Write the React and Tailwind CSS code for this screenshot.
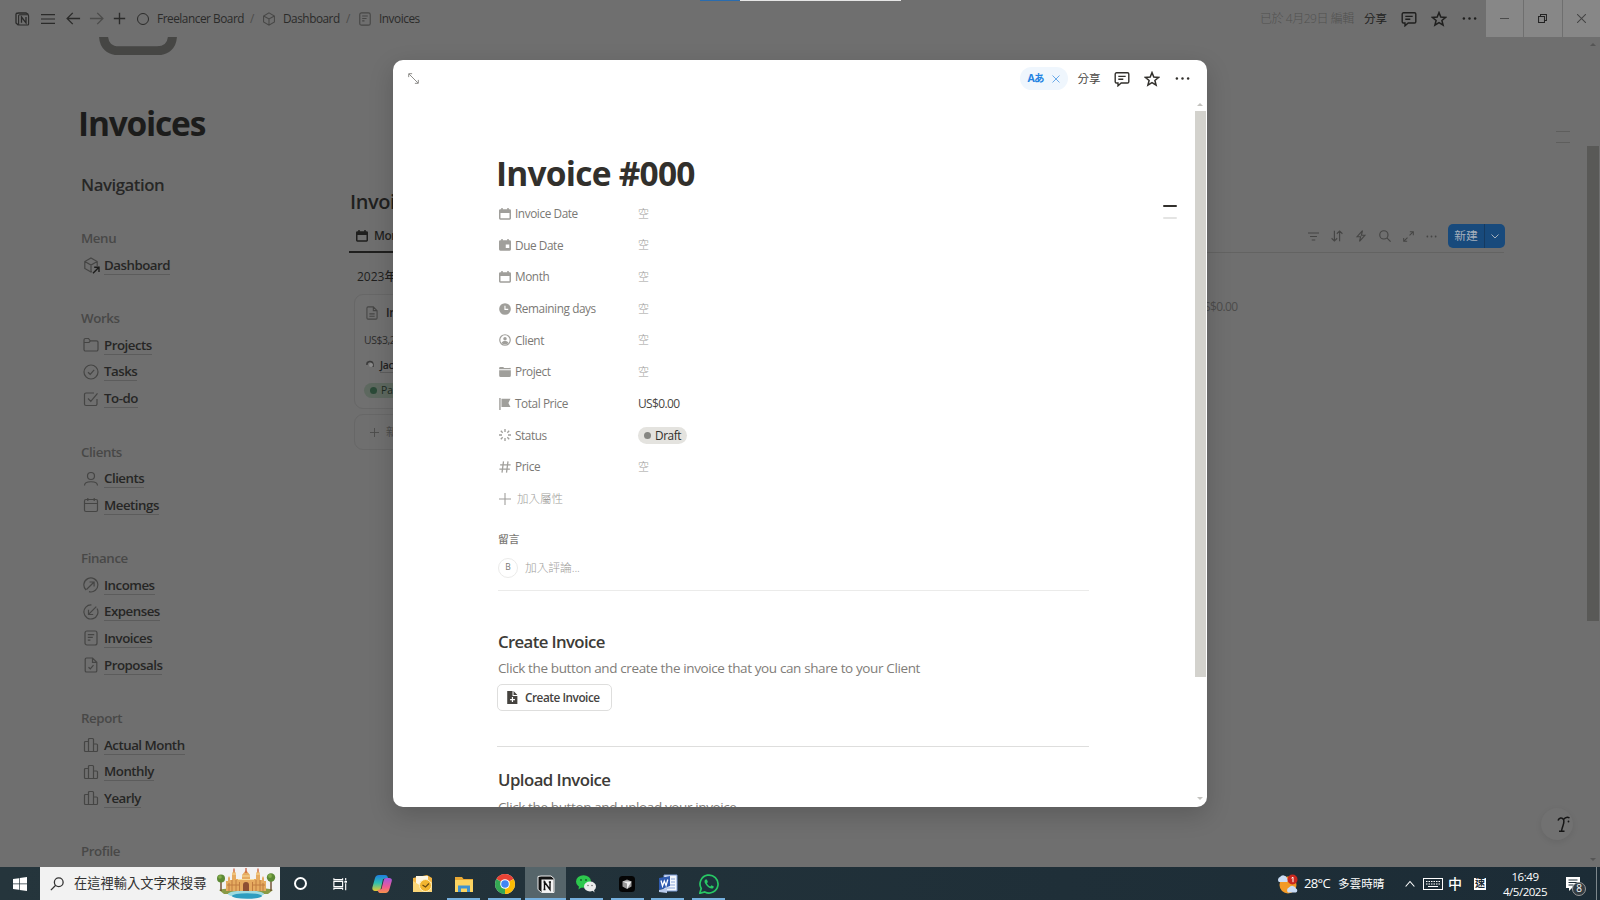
import React from "react";

const Svg = ({ s = 14, vb = 16, w = 1.3, className = "", children }) => (
  <svg width={s} height={s} viewBox={`0 0 ${vb} ${vb}`} fill="none" stroke="currentColor" strokeWidth={w} className={"shrink-0 " + className}>
    {children}
  </svg>
);

const Cube = (p) => <Svg {...p}><path d="M8 1 14.2 4.5v7L8 15 1.8 11.5v-7zM1.8 4.5 8 8l6.2-3.5M8 8v7" /></Svg>;
const NotePage = (p) => <Svg {...p}><rect x="2" y="1" width="12" height="14" rx="2" /><path d="M4.800 4.600h6.400M4.800 7.400h5M4.800 10.200h2.600" /></Svg>;
const Comment = (p) => <Svg {...p}><path d="M2.500 1.800h11a1.300 1.300 0 0 1 1.300 1.300v7.600a1.300 1.300 0 0 1-1.300 1.300H7.200L4 14.800V12H2.500a1.300 1.300 0 0 1-1.300-1.300V3.100a1.300 1.300 0 0 1 1.300-1.300zM4.300 5.400h7.400M4.300 8.200h5" /></Svg>;
const Star = (p) => <Svg {...p}><path d="m8 1.600 1.800 4.500 4.800.3-3.700 3.100 1.200 4.700L8 11.600l-4.100 2.600 1.200-4.700L1.400 6.400l4.800-.3z" /></Svg>;
const Dots = (p) => <Svg {...p}><g fill="currentColor" stroke="none"><circle cx="2" cy="8" r="1.300" /><circle cx="8" cy="8" r="1.300" /><circle cx="14" cy="8" r="1.300" /></g></Svg>;
const Folder = (p) => <Svg {...p}><path d="M1 12.500V3a1.500 1.500 0 0 1 1.500-1.500h3L7.300 3.800h6.200A1.500 1.500 0 0 1 15 5.300v7.200a1.500 1.500 0 0 1-1.500 1.500h-11A1.500 1.500 0 0 1 1 12.500zM1 5.500h5l1.500-1.700" /></Svg>;
const CheckCircle = (p) => <Svg {...p}><circle cx="8" cy="8" r="7" /><path d="m5 8.200 2.200 2.100 4-4.400" /></Svg>;
const CheckSquare = (p) => <Svg {...p}><path d="M14 8v5a1.500 1.500 0 0 1-1.500 1.500h-9.500A1.500 1.500 0 0 1 1.500 13V3.500A1.500 1.500 0 0 1 3 2h8M5 7.500l2.800 2.800 6.700-8" /></Svg>;
const Person = (p) => <Svg {...p}><circle cx="8" cy="5" r="3.500" /><path d="M1.500 14.500c0-5 13-5 13 0" /></Svg>;
const Calendar = (p) => <Svg {...p}><rect x="1.500" y="2.500" width="13" height="12" rx="1.500" /><path d="M1.500 6.500h13M4.800 1v3M11.200 1v3" /></Svg>;
const ArrowUp = (p) => <Svg {...p}><path d="M3 13A7 7 0 1 1 6 14.700M3.500 12.500 10.800 5.300M6.500 5h4.600v4.600" /></Svg>;
const ArrowDown = (p) => <Svg {...p}><path d="M14 4.500A7 7 0 1 1 8.500 1M13.300 2.700 5.800 10.200M5.500 5.800v4.700h4.700" /></Svg>;
const FileCheck = (p) => <Svg {...p}><path d="M9.500 1H3.500A1.300 1.300 0 0 0 2.200 2.300v11.400A1.300 1.300 0 0 0 3.500 15h9a1.300 1.300 0 0 0 1.300-1.300V5.300zM9.500 1v4.300h4.300M5.500 10.200l1.800 1.600 3.200-3.600" /></Svg>;
const Bars = (p) => <Svg {...p}><path d="M5.500 14.500h-3A1 1 0 0 1 1.500 13.500V5.500a1 1 0 0 1 1-1h3zM5.500 14.500v-12a1 1 0 0 1 1-1h3a1 1 0 0 1 1 1v12zM10.500 14.500v-7.500h3a1 1 0 0 1 1 1v5.500a1 1 0 0 1-1 1z" /></Svg>;
const FileText = (p) => <Svg {...p}><path d="M9.500 1H3.500A1.300 1.300 0 0 0 2.200 2.300v11.400A1.300 1.300 0 0 0 3.500 15h9a1.300 1.300 0 0 0 1.300-1.300V5.300zM9.500 1v4.300h4.300M5 9h6M5 11.800h6" /></Svg>;
const SolidCal = (p) => <Svg {...p}><path fill="currentColor" stroke="none" fillRule="evenodd" d="M3 0h2v1.500h6V0h2v1.500h1.200A1.800 1.800 0 0 1 16 3.300v10.400a1.800 1.800 0 0 1-1.800 1.800H1.800A1.800 1.800 0 0 1 0 13.700V3.300A1.800 1.800 0 0 1 1.800 1.500H3zM2 6.500v7h12v-7z" /></Svg>;

const DashIcon = () => (
  <span className="relative flex">
    <Cube s={16} w={1.2} />
    <svg width="8" height="8" viewBox="0 0 8 8" className="absolute -right-[1px] -bottom-[1px] bg-[#6f6f6f] text-[#1d1d1c]" fill="none" stroke="currentColor" strokeWidth="1.400"><path d="M1 7.300 6.700 1.500M2.200 1.200h4.800v4.800" /></svg>
  </span>
);

const nav = [
  ["Menu", [["Dashboard", DashIcon]]],
  ["Works", [["Projects", Folder], ["Tasks", CheckCircle], ["To-do", CheckSquare]]],
  ["Clients", [["Clients", Person], ["Meetings", Calendar]]],
  ["Finance", [["Incomes", ArrowUp], ["Expenses", ArrowDown], ["Invoices", NotePage], ["Proposals", FileCheck]]],
  ["Report", [["Actual Month", Bars], ["Monthly", Bars], ["Yearly", Bars]]],
  ["Profile", []],
];

function TopBar() {
  return (
    <header className="flex h-[37px] shrink-0 items-center text-[11.800px] tracking-[-0.039em] text-[#2b2b2a]">
      <div className="flex flex-1 items-center">
        <svg width="15" height="14" viewBox="0 0 15 14" className="ml-[15px]" fill="none" stroke="currentColor">
          <path d="M1 1.500v9.500l2.500 2.200M1 1.500 3.700 1h7.300l2.500 1.500" strokeWidth="1.300" />
          <rect x="3.600" y="2.800" width="10" height="10.200" rx="1" strokeWidth="1.100" />
          <path d="M6.500 10.800V5l4.500 5.800V5" strokeWidth="1.300" />
        </svg>
        <Svg s={14} w={1.400} className="ml-[11px]"><path d="M0 3h16M0 8h16M0 13h16" /></Svg>
        <Svg s={15} w={1.400} className="ml-[11px]"><path d="M15 8H1.500M7.200 2 1.200 8l6 6" /></Svg>
        <Svg s={15} w={1.400} className="ml-[8px] text-[#4c4c4b]"><path d="M1 8h13.500M8.800 2l6 6-6 6" /></Svg>
        <Svg s={13} w={1.700} className="ml-[9px]"><path d="M8 1v14M1 8h14" /></Svg>
        <span className="ml-[11px] size-[12px] rounded-full border-[1.600px] border-current" />
        <span className="ml-[8px] w-[86px] whitespace-nowrap">Freelancer Board</span>
        <span className="ml-[7px] w-[5px] text-[#4c4c4b]">/</span>
        <Cube s={14} w={1.200} className="ml-[7px] text-[#474746]" />
        <span className="ml-[7px] w-[56px]">Dashboard</span>
        <span className="ml-[7px] w-[5px] text-[#4c4c4b]">/</span>
        <NotePage s={14} w={1.300} className="ml-[7px] text-[#474746]" />
        <span className="ml-[7px]">Invoices</span>
      </div>
      <span className="w-[104px] text-[12px] font-light whitespace-nowrap text-[#515150]">已於 4月29日 編輯</span>
      <span className="w-[37px] text-[11.500px] tracking-normal text-[#1f1f1e]">分享</span>
      <Comment s={16} w={1.400} className="text-[#1f1f1e]" />
      <Star s={16} w={1.500} className="ml-[14px] text-[#1f1f1e]" />
      <Dots s={15} className="ml-[15px] text-[#1f1f1e]" />
      <div className="ml-[9px] flex h-full w-[114px] gap-px text-[#444]">
        <span className="flex flex-1 items-center justify-center bg-[#878787]"><Svg s={9} w={1.600}><path d="M0 8h16" /></Svg></span>
        <span className="flex flex-1 items-center justify-center bg-[#878787] text-[#222]"><Svg s={9} w={1.800}><path d="M1 4.500h10.500V15H1zM4.500 4.500V1H15v10.500h-3.500" /></Svg></span>
        <span className="flex flex-1 items-center justify-center bg-[#878787]"><Svg s={9} w={1.800}><path d="m0 0 16 16M16 0 0 16" /></Svg></span>
      </div>
    </header>
  );
}

function Sidebar() {
  return (
    <aside className="flex w-[349px] shrink-0 flex-col pl-[81px]">
      <svg width="78" height="18" viewBox="0 0 78 18" className="ml-[18px] shrink-0" fill="none" stroke="#464644" strokeWidth="9"><path d="M4.500-2C4.500 9 11 13.800 20 13.800h38C67 13.800 73.500 9 73.500-2" /></svg>
      <h1 className="mt-[44px] -ml-[3px] h-[48px] text-[33.500px] leading-[48px] font-bold tracking-[-0.036em] text-[#1c1c1b]">Invoices</h1>
      <h2 className="mt-[26px] h-[24px] text-[16.800px] leading-[24px] font-semibold tracking-[-0.027em] text-[#272726]">Navigation</h2>
      <nav className="mt-[28.300px] flex flex-col gap-[26.670px] text-[13.300px] tracking-[-0.037em]">
        {nav.map(([title, items]) => (
          <section key={title} className="flex flex-col">
            <h3 className="h-[26.670px] leading-[26.670px] font-semibold tracking-[-0.030em] text-[#484847]">{title}</h3>
            {items.map(([label, Icon]) => (
              <a key={label} className="flex h-[26.670px] items-center gap-[5px] pl-[2px] text-[#454544]">
                <Icon s={16} w={1.200} />
                <span className="border-b border-[#5c5c5c] leading-[18px] font-semibold text-[#262625]">{label}</span>
              </a>
            ))}
          </section>
        ))}
      </nav>
    </aside>
  );
}

function Board() {
  return (
    <section className="flex w-[1155px] shrink-0 flex-col pt-[151px] text-[#1f1f1e]">
      <h2 className="h-[28px] pl-[1px] text-[20px] leading-[28px] font-semibold tracking-[-0.020em]">Invoices</h2>
      <div className="mt-[6px] flex h-[31px] items-start justify-between border-b border-[#636362]">
        <span className="flex h-[31px] items-center gap-[6px] border-b-2 border-[#1f1f1e] pr-2 pb-[1px] pl-[7px] text-[11.800px] font-semibold tracking-[-0.035em]">
          <SolidCal s={12} />Month
        </span>
        <div className="mt-[2px] flex items-center text-[#454544]">
          <Svg s={11} w={1.600}><path d="M0 3h16M3 8h10M5.500 13h5" /></Svg>
          <Svg s={12} w={1.500} className="ml-[12px]"><path d="M4.500 1v13.500M.8 11l3.700 3.700L8.200 11M11.500 15V1.500M7.800 5l3.700-3.700L15.200 5" /></Svg>
          <Svg s={12} w={1.500} className="ml-[12px]"><path d="M10 .8 2.800 9H7.500L6 15.200 13.200 7H8.500z" /></Svg>
          <Svg s={12} w={1.500} className="ml-[12px]"><circle cx="6.500" cy="6.500" r="5.500" /><path d="m10.500 10.500 5 5" /></Svg>
          <Svg s={11} w={1.500} className="ml-[12px]"><path d="M9.500 6.500 15 1M10 1h5v5M6.500 9.500 1 15M1 10v5h5" /></Svg>
          <Dots s={11} className="ml-[12px]" />
          <button className="ml-[11px] -mr-[1px] flex h-[24px] w-[57px] items-center overflow-hidden rounded-[5px] bg-[#184a7c] text-[11.800px] text-[#a5b0bd]">
            <span className="flex h-full w-[37px] items-center justify-center border-r border-[#153a60]">新建</span>
            <span className="flex flex-1 justify-center"><Svg s={8} w={2}><path d="m1 5 7 7 7-7" /></Svg></span>
          </button>
        </div>
      </div>
      <div className="flex items-start">
        <div className="flex w-[280px] flex-col pl-[5px]">
          <div className="mt-[14px] h-[20px] pl-[3px] text-[12px] leading-[20px] font-medium">2023年8月</div>
          <div className="mt-[7px] flex h-[115px] flex-col rounded-[9px] border border-[#676767] bg-[#707070] pl-[9px] text-[11px]">
            <span className="mt-[9px] flex h-[18px] items-center gap-[7px] pl-[1px] text-[11.800px] font-semibold tracking-[-0.030em]"><FileText s={14} w={1.200} className="text-[#454544]" />Invoice #001</span>
            <span className="mt-[10px] h-[17px] text-[10.400px] leading-[17px] tracking-[-0.040em] text-[#2c2c2b]">US$3,200.00</span>
            <span className="mt-[8px] flex h-[16px] items-center gap-[5px] pl-[2px] text-[10.400px] font-semibold tracking-[-0.030em]">
              <svg width="9" height="10" viewBox="0 0 9 10"><path d="M1 5a3 3 0 0 1 6-1v3" fill="none" stroke="#3b3b3b" strokeWidth="1.500" /><circle cx="5" cy="5" r="2" fill="#8b8b8b" /></svg>
              <span className="border-b border-[#5c5c5c] leading-[14px]">Jack Smith</span>
            </span>
            <span className="mt-[10px] flex h-[15px] w-[48px] items-center gap-[4px] rounded-full bg-[#5d685f] pl-[6px] text-[10.400px] text-[#1d2b23]"><i className="size-[7px] rounded-full bg-[#2b4a38]" />Paid</span>
          </div>
          <div className="mt-[5px] flex h-[36px] items-center gap-[7px] rounded-[9px] border border-[#676767] pl-[15px] text-[11.500px] text-[#4c4c4b]"><Svg s={9} w={1.600}><path d="M8 0v16M0 8h16" /></Svg>新建</div>
        </div>
        <span className="mt-[45px] ml-[567px] text-[12px] leading-[18px] tracking-[-0.053em] text-[#4c4c4b]">US$0.00</span>
      </div>
    </section>
  );
}

const Clock = (p) => <Svg {...p}><path fill="currentColor" stroke="none" fillRule="evenodd" d="M8 .2a7.800 7.800 0 1 0 0 15.600A7.800 7.800 0 0 0 8 .2zM7.200 3.500h1.500v4.200h3.600v1.500H7.200z" /></Svg>;
const SolidDue = (p) => <Svg {...p}><path fill="currentColor" stroke="none" fillRule="evenodd" d="M3 0h2v1.500h6V0h2v1.500h1.200A1.800 1.800 0 0 1 16 3.300v10.400a1.800 1.800 0 0 1-1.800 1.800H1.800A1.800 1.800 0 0 1 0 13.700V3.300A1.800 1.800 0 0 1 1.800 1.500H3zM9 7.300v4.700h4.700V7.300z" /></Svg>;
const UserCircle = (p) => <Svg {...p}><circle cx="8" cy="8" r="7" strokeWidth="1.600" /><circle cx="8" cy="6.200" r="2.300" fill="currentColor" stroke="none" /><path d="M3.500 12c1-3.500 8-3.500 9 0-2 2.500-7 2.500-9 0z" fill="currentColor" stroke="none" /></Svg>;
const SolidFolder = (p) => <Svg {...p}><g fill="currentColor" stroke="none"><path d="M.2 4.300V2.700A1.500 1.500 0 0 1 1.700 1.200h3.800l1.500 1.300h7.200A1.500 1.500 0 0 1 15.800 4v.3z" /><path d="M.2 5.500h15.600v7.300a2 2 0 0 1-2 2H2.200a2 2 0 0 1-2-2z" /></g></Svg>;
const Flag = (p) => <Svg {...p}><path fill="currentColor" stroke="none" d="M.3 0h1.900v16H.3zM3.300 1h12L12.500 6.500l2.800 5.500h-12z" /></Svg>;
const Burst = (p) => <Svg {...p}><path strokeWidth="1.800" d="M8 0v4M8 12v4M0 8h4M12 8h4M2.400 2.400l2.500 2.500M11.100 11.100l2.500 2.500M2.400 13.600l2.500-2.500M11.100 4.900l2.500-2.500" /></Svg>;
const Hash = (p) => <Svg {...p}><path strokeWidth="1.700" d="M6 .5 4 15.500M12 .5l-2 15M1.500 5.300h14M.5 10.700h14" /></Svg>;

const props = [
  ["Invoice Date", SolidCal], ["Due Date", SolidDue], ["Month", SolidCal], ["Remaining days", Clock], ["Client", UserCircle],
  ["Project", SolidFolder], ["Total Price", Flag, "US$0.00"], ["Status", Burst, "Draft"], ["Price", Hash],
];

function Value({ v }) {
  if (v === "Draft")
    return <span className="flex h-[17px] w-[49px] items-center gap-[4px] rounded-full bg-[#e4e3df] pl-[6px] tracking-[-0.035em] text-[#32302c]"><i className="size-[7px] rounded-full bg-[#868682]" />Draft</span>;
  if (v) return <span className="text-[12px] tracking-[-0.053em] text-[#4a4844]">{v}</span>;
  return <span className="text-[11px] font-light text-[#9d9c99]">空</span>;
}

function Modal() {
  return (
    <div className="absolute top-[60px] left-[393.400px] flex h-[747px] w-[814px] flex-col overflow-hidden rounded-[10px] bg-white shadow-[0_8px_24px_rgba(0,0,0,0.180)]">
      <header className="flex h-[37px] shrink-0 items-center pr-[17px] pl-[14.600px] text-[#32302c]">
        <Svg s={11} w={1.400} className="text-[#8a8986]"><path d="m1.500 1.500 13 13M1 6V1h5M15 10v5h-5" /></Svg>
        <span className="mr-[9px] ml-auto flex h-[23px] w-[48px] items-center justify-between rounded-full bg-[#eff6fd] pr-[8px] pl-[7px] text-[10.500px] font-bold tracking-[-0.060em] text-[#2383e2]">
          Aあ<Svg s={8} w={1.800} className="text-[#5ba3e8]"><path d="m1 1 14 14M15 1 1 15" /></Svg>
        </span>
        <span className="w-[37px] text-[11.500px] text-[#4a4844]">分享</span>
        <Comment s={16} w={1.400} />
        <Star s={16} w={1.500} className="ml-[14px]" />
        <Dots s={15} className="ml-[15px]" />
      </header>
      <div className="flex min-h-0 flex-1">
        <main className="ml-[102.600px] flex w-[593px] shrink-0 flex-col overflow-hidden pl-[2px] text-[11.800px] tracking-[-0.035em]">
          <h1 className="mt-[52px] -ml-[2px] h-[49px] shrink-0 text-[33.500px] leading-[49px] font-bold tracking-[-0.023em] text-[#32302c]">Invoice #000</h1>
          <div className="flex shrink-0 flex-col text-[#7b7975]">
            {props.map(([label, Icon, v]) => (
              <div key={label} className="flex h-[31.670px] items-center">
                <Icon s={12} w={1.400} className="ml-[1px] text-[#a09f9b]" />
                <span className="ml-[4px] w-[123px]">{label}</span>
                <Value v={v} />
              </div>
            ))}
            <div className="flex h-[31.670px] items-center gap-[6px] text-[11.500px] font-light tracking-normal text-[#9d9c99]"><Svg s={12} w={1.400} className="ml-[1px]"><path d="M8 0v16M0 8h16" /></Svg>加入屬性</div>
          </div>
          <div className="mt-[15px] h-[18px] shrink-0 text-[10.700px] leading-[18px] font-medium tracking-normal text-[#7b7975]">留言</div>
          <div className="mt-[10px] flex h-[20px] shrink-0 items-center gap-[7px] text-[11.800px] font-light tracking-[-0.010em] text-[#9d9c99]">
            <span className="flex size-[20px] items-center justify-center rounded-full border border-[#ebebea] text-[8.500px] font-normal text-[#7b7975]">B</span>加入評論...
          </div>
          <hr className="mt-[12px] shrink-0 border-[#ebebea]" />
          <h2 className="mt-[39px] h-[24px] shrink-0 text-[16.800px] leading-[24px] font-semibold tracking-[-0.038em] text-[#3d3b37]">Create Invoice</h2>
          <p className="mt-[3px] h-[23px] shrink-0 text-[13.500px] leading-[23px] tracking-[-0.028em] text-[#7f7d79]">Click the button and create the invoice that you can share to your Client</p>
          <button className="mt-[4px] -ml-[1px] flex h-[27px] w-[115px] shrink-0 items-center gap-[6px] rounded-[5px] border border-[#dededd] pt-[1px] pl-[8px] font-semibold tracking-[-0.040em] text-[#45433f]">
            <Svg s={13}><path fill="currentColor" stroke="none" fillRule="evenodd" d="M1.500 0H8v6h6v10H1.500zM9.300 0 14 4.800H9.300zM7.200 7.500v2.300H5v1.500h2.200v2.300h1.500v-2.300H11V9.800H8.700V7.500z" /></Svg>Create Invoice
          </button>
          <hr className="mt-[35px] -ml-[1px] shrink-0 border-[#dededd]" />
          <h2 className="mt-[21px] h-[24px] shrink-0 text-[16.800px] leading-[24px] font-semibold tracking-[-0.032em] text-[#3d3b37]">Upload Invoice</h2>
          <p className="mt-[4px] h-[22px] shrink-0 text-[13.500px] leading-[22px] tracking-[-0.028em] text-[#7f7d79]">Click the button and upload your invoice</p>
        </main>
        <div className="ml-[74px] flex w-[14px] flex-col gap-[10px] pt-[108px]"><i className="h-[2px] rounded bg-[#32302c]" /><i className="h-[2px] rounded bg-[#e4e4e3]" /></div>
        <div className="ml-[18px] flex w-[11px] flex-col items-center">
          <svg width="6" height="3" viewBox="0 0 6 3" className="mt-[6px]"><path d="M3 0 6 3H0z" fill="#c4c3bf" /></svg>
          <i className="mt-[5px] h-[566px] w-[11px] bg-[#d3d2cd]" />
          <svg width="6" height="3" viewBox="0 0 6 3" className="mt-[120px]"><path d="M3 3 6 0H0z" fill="#c4c3bf" /></svg>
        </div>
      </div>
    </div>
  );
}

const icons = {
  copilot: <><path d="M7 1h6c2 0 2.500 1 3 3l-5 1-2 9c-.6 2-1.500 3-3.500 3H4c-3.500 0-4-2-3.500-4L3 4c.6-2 2-3 4-3z" fill="url(#cpA)" /><path d="M14.500 4H17c3.500 0 3 2.500 2.500 4l-2 7c-.7 2.500-2 4-4 4H8c-1.500 0-2-1.500-2.500-3l4-1 2-8c.5-2 1-3 3-3z" fill="url(#cpB)" /></>,
  outlook: <><path d="M0 4 14 1l5 3v14H0z" fill="#f3b544" /><path d="M3 2h12v9H3z" fill="#fdf6e4" /><path d="M0 7l8 5 11-4v10H0z" fill="#fbd678" /><circle cx="12.500" cy="11.500" r="6" fill="#f3b52f" stroke="#fff0c0" /><path d="m9.500 11 3 2 3.500-3.500" fill="none" stroke="#6a4a10" strokeWidth="1.200" /></>,
  folder: <><path d="M1 3h7l1.500 2H19v13H1z" fill="#e9a935" /><path d="M1 6h18v12H1z" fill="#fcd462" /><path d="M4 18v-6.500h12V18h-3v-3.500H7V18z" fill="#3f93d2" /></>,
  chrome: <><circle cx="10" cy="10" r="10" fill="#fff" /><path d="M10 10 1.340 5A10 10 0 0 1 18.660 5z" fill="#ea4335" /><path d="M10 10 18.660 5A10 10 0 0 1 10 20z" fill="#fbbc05" /><path d="M10 10v10A10 10 0 0 1 1.340 5z" fill="#34a853" /><circle cx="10" cy="10" r="4.800" fill="#fff" /><circle cx="10" cy="10" r="3.800" fill="#4285f4" /></>,
  notion: <><path d="M2 2.500 5 2h10l3 2.500v14H5.500L2 15.500z" fill="#111" stroke="#eee" /><rect x="5.500" y="5.500" width="12" height="12.500" fill="#f5f5f5" /><path d="M8.500 15.500V8l5.500 7.500V8M7.500 8h2M12.800 8H15M7.500 15.500h2" stroke="#111" strokeWidth="1.400" fill="none" /></>,
  wechat: <><ellipse cx="7.500" cy="7.500" rx="7.500" ry="6.300" fill="#2dc84d" /><path d="M3 12l-.5 3.500L6 13z" fill="#2dc84d" /><circle cx="5" cy="6" r="1" fill="#14652a" /><circle cx="10" cy="6" r="1" fill="#14652a" /><ellipse cx="14" cy="12.500" rx="6" ry="5" fill="#ececec" /><path d="m16 16 2.500 2.500-.5-3z" fill="#ececec" /><circle cx="12" cy="11.500" r=".8" fill="#777" /><circle cx="16" cy="11.500" r=".8" fill="#777" /></>,
  cursor: <><rect x="2" y="2" width="16" height="16" rx="3.500" fill="#050505" /><path d="m10 5.500 4.500 2v5L10 15l-4.500-2.500v-5z" fill="#999" /><path d="M5.500 7.500 14.500 7.500 10 15V9.500z" fill="#eee" /></>,
  word: <><path d="M6 1h13v16H6z" fill="#f4f7fc" stroke="#7d9cd6" /><path d="M13 5h4M13 8h4M8 11h9M8 14h9" stroke="#8aa5d8" strokeWidth="1.200" /><path d="M1 4 12 2v10L1 16z" fill="#2f5bb0" /><path d="m3 6.500 1.500 5.500L6.300 7l1.800 4.500L9.800 5.500" fill="none" stroke="#fff" strokeWidth="1.300" /><path d="M1 16l8-2v5l-8-1z" fill="#b7c9ea" /></>,
  whatsapp: <><path d="M.8 19.300 2.200 14.500A9 9 0 1 1 5.800 18z" fill="#1c333c" stroke="#28c864" strokeWidth="1.700" /><path d="M6.500 5.500c-1.200.8-1.300 2.500-.2 4.200 1.500 2.500 3.800 4.500 6.200 4.800 1.400.1 2.300-.8 2.300-2.100l-2.300-1.200-1.200 1.300c-1.500-.6-2.700-1.700-3.400-3.200l1-1.200-1-2.600z" fill="#28c864" /></>,
};
const apps = [["copilot"], ["outlook"], ["folder", 1], ["chrome", 1], ["notion", 2], ["wechat", 1], ["cursor", 1], ["word", 1], ["whatsapp", 1]];

function Castle() {
  return (
    <svg width="60" height="32" viewBox="0 0 60 32">
      <path d="M3 22c8-3 46-3 54 0l-5 4H8z" fill="#8a9a45" />
      <ellipse cx="30" cy="26" rx="18" ry="3.500" fill="#9fdbe0" />
      <ellipse cx="31" cy="28" rx="15" ry="2.800" fill="#2f9dc0" />
      <path d="M10 23V13h2v-3l1-2 1 2v2h2V5.500L18 2l2 3.500V11h6V7l4-5 4 5v4h6V5.500L42 2l2 3.500V12h2v-2l1-2 1 2v3h2v10z" fill="#e6ab60" />
      <path d="M27 23v-6a3 3 0 0 1 6 0v6z" fill="#8d4f33" />
      <path d="M13 15v8M16 12v11M20 12v11M23.500 14v9M36.500 14v9M40 12v11M44 12v11M47 15v8M11 17h13M36 17h13" stroke="#c07c40" />
      <path d="M22 11.500h16M26 8h8M16 6h4M40 6h4" stroke="#f9dc9c" />
      <path d="M30 0v5M18 .5v3M42 .5v3" stroke="#c9573a" strokeWidth="1.200" />
      <path d="M5 12v11M55 12v11" stroke="#6b4a2a" strokeWidth="1.400" />
      <circle cx="5" cy="10.500" r="4" fill="#5d8a35" /><circle cx="4" cy="9" r="1.800" fill="#83ad4a" />
      <circle cx="55" cy="9.500" r="4.200" fill="#5d8a35" /><circle cx="54" cy="8" r="1.900" fill="#83ad4a" />
    </svg>
  );
}

function Taskbar() {
  return (
    <footer className="flex h-[33px] shrink-0 items-center bg-gradient-to-r from-[#25353c] to-[#1c2c36] text-white">
      <span className="flex w-[40px] justify-center"><svg width="14" height="14" viewBox="0 0 14 14"><path fill="#fff" d="M0 2 6 1.200v5.400H0zM6.700 1.100 14 0v6.600H6.700zM0 7.300h6v5.500L0 12zM6.700 7.300H14V14l-7.300-1.100z" /></svg></span>
      <div className="flex h-full w-[240px] items-center bg-[#f2f2f2] pl-[10px] text-[#333]">
        <Svg s={14} w={1.500}><circle cx="10" cy="6" r="5" /><path d="M6.500 9.500 1 15" /></Svg>
        <span className="ml-[10px] w-[142px] text-[13.250px] whitespace-nowrap">在這裡輸入文字來搜尋</span>
        <Castle />
      </div>
      <span className="flex w-[40px] justify-center"><i className="size-[13px] rounded-full border-2 border-white" /></span>
      <span className="flex w-[40px] justify-center"><Svg s={14} w={1.300}><path d="M1 1.500V3h10V1.500M1 14.500V13h10v1.500M1 5h10v6H1zM14.500 1v3M14.500 7v8" /><path d="M13 5.500h3" strokeWidth="2" /></Svg></span>
      <span className="w-[2px]" />
      <svg width="0" height="0" className="absolute">
        <defs>
          <linearGradient id="cpA" x1="0" y1="0" x2="0" y2="1"><stop offset="0" stopColor="#1e7ee0" /><stop offset=".5" stopColor="#2dbfb0" /><stop offset="1" stopColor="#e7c92e" /></linearGradient>
          <linearGradient id="cpB" x1="0" y1="0" x2="0" y2="1"><stop offset="0" stopColor="#a557e0" /><stop offset=".6" stopColor="#ef5a92" /><stop offset="1" stopColor="#f5934a" /></linearGradient>
        </defs>
      </svg>
      {apps.map(([n, state]) => (
        <span key={n} className={"flex h-full w-[40.800px] flex-col items-center " + (state === 2 ? "bg-[#56656a]" : "")}>
          <svg width="20" height="20" viewBox="0 0 20 20" className="mt-[7px] mb-auto">{icons[n]}</svg>
          {state && <i className={"h-[2px] bg-[#76b0de] " + (state === 2 ? "w-full" : "w-[33px]")} />}
        </span>
      ))}
      <div className="ml-auto flex h-full items-center">
        <svg width="22" height="20" viewBox="0 0 22 20"><circle cx="11" cy="11" r="8.500" fill="#f39a26" /><path d="M2 8a3 3 0 0 1 1-5 4 4 0 0 1 7 1 2.500 2.500 0 0 1 0 4z" fill="#c9dcf5" /><path d="M11 18.500a3 3 0 0 1 1-5 4 4 0 0 1 7 1 2.200 2.200 0 0 1 0 4z" fill="#c9dcf5" /><circle cx="15.500" cy="5.500" r="5" fill="#c9281e" /><path d="m14.500 4.200 1.500-1v5" stroke="#fff" fill="none" /></svg>
        <span className="ml-[5px] w-[34px] text-[13px] tracking-[-0.050em]">28°C</span>
        <span className="w-[67px] text-[11.600px]">多雲時晴</span>
        <Svg s={10} w={1.800}><path d="m1 12 7-8 7 8" /></Svg>
        <svg width="20" height="12" viewBox="0 0 20 12" className="ml-[8px]" fill="none" stroke="#fff"><rect x=".5" y=".5" width="19" height="11" /><path d="M3 3.500h14M3 6h14" strokeDasharray="1.500 1" /><path d="M5 8.500h10" /></svg>
        <span className="ml-[5px] w-[26px] text-[14px] font-medium">中</span>
        <span className="flex size-[12px] items-center justify-center bg-white text-[10px] font-bold text-[#1c2c36]">速</span>
        <div className="ml-[12px] w-[54px] text-center text-[11.500px] leading-[15px] tracking-[-0.040em]">16:49<br />4/5/2025</div>
        <span className="relative ml-[14px] flex w-[28px]">
          <svg width="14" height="14" viewBox="0 0 14 14"><path d="M0 0h14v11H6l-3 3v-3H0z" fill="#fff" /><path d="M2.500 3h9M2.500 5.500h9M2.500 8h5" stroke="#1c2c36" /></svg>
          <b className="absolute top-[5px] left-[6px] flex size-[14px] items-center justify-center rounded-full border border-[#999] bg-[#333c42] text-[10px] font-normal">8</b>
        </span>
        <i className="mr-[3px] ml-[2px] h-full w-px bg-[#7c868b]" />
      </div>
    </footer>
  );
}

export default function App() {
  return (
    <div className="relative flex h-[900px] w-[1600px] flex-col overflow-hidden bg-[#6f6f6f] font-['Open_Sans','Noto_Sans_CJK_TC',sans-serif]">
      <TopBar />
      <div className="flex min-h-0 flex-1 overflow-hidden">
        <Sidebar />
        <Board />
        <div className="ml-[52px] flex w-[14px] flex-col gap-[10px] pt-[94px]"><i className="h-px bg-[#5e5e5d]" /><i className="h-px bg-[#5e5e5d]" /></div>
        <div className="ml-[17px] flex w-[12px] flex-col items-center">
          <svg width="6" height="3" viewBox="0 0 6 3" className="mt-[6px] shrink-0"><path d="M3 0 6 3H0z" fill="#555" /></svg>
          <i className="mt-[100px] h-[475px] w-full shrink-0 bg-[#595957]" />
          <svg width="6" height="3" viewBox="0 0 6 3" className="mt-[237px] shrink-0"><path d="M3 3 6 0H0z" fill="#555" /></svg>
        </div>
      </div>
      <Taskbar />
      <div className="absolute top-0 left-[700px] flex h-px w-[201px]"><i className="w-[40px] bg-[#2a6cae]" /><i className="flex-1 bg-[#e6e6e6]" /></div>
      <div className="absolute top-[808px] left-[1541px] flex size-[32px] items-center justify-center rounded-full bg-[#717171] pl-[13px] shadow-[0_2px_6px_rgba(0,0,0,0.080)]">
        <svg width="14" height="17" viewBox="0 0 14 17" fill="none" stroke="#151515" strokeWidth="1.500"><path d="M1 4.500C2 1.500 5 1 6.500 3.500 8 1.500 10.500.8 12.500 1.800M6.500 3.500C8 7 5.500 9 4.500 15M2 15.300h5.500" /><circle cx="11.500" cy="5.500" r=".9" fill="#151515" stroke="none" /></svg>
      </div>
      <Modal />
    </div>
  );
}
